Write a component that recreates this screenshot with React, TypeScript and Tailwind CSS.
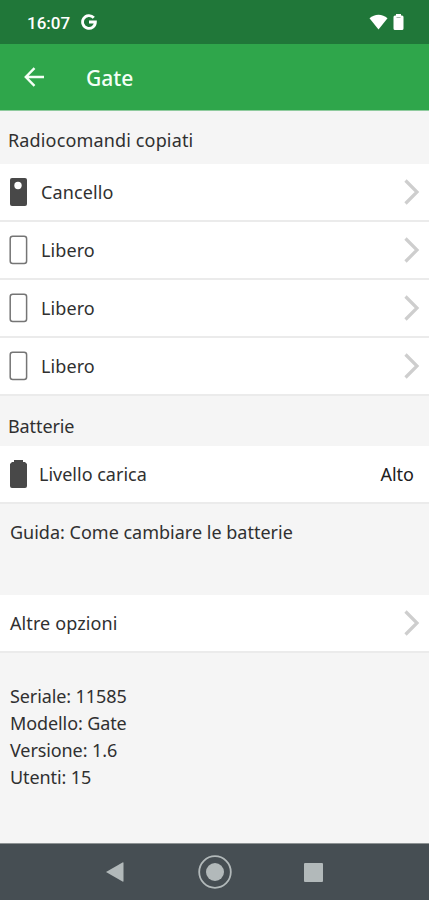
import type { ReactNode } from "react";

const remotes = [
  { name: "Cancello", used: true },
  { name: "Libero", used: false },
  { name: "Libero", used: false },
  { name: "Libero", used: false },
];

const info = ["Seriale: 11585", "Modello: Gate", "Versione: 1.6", "Utenti: 15"];

export default function App() {
  return (
    <div className="flex h-[900px] w-[429px] flex-col overflow-hidden bg-[#f5f5f5] font-['Noto_Sans',sans-serif] text-[18px] leading-[27px] text-[#303030]">
      <StatusBar />
      <header className="flex h-[67px] shrink-0 items-center border-b border-[#8fcb9e] bg-[#2fa64b] text-[#f4fff6]">
        <svg className="ml-6 h-5 w-5" viewBox="0 0 20 20" fill="none" stroke="currentColor" strokeWidth="2.4">
          <path d="M20 10H2M10.5 1.2 1.8 10l8.7 8.8" />
        </svg>
        <h1 className="ml-[42px] pt-0.5 text-[21px] font-medium">Gate</h1>
      </header>
      <main className="flex-1">
        <h2 className="h-[53px] px-2 pt-4 tracking-[0.15px]">Radiocomandi copiati</h2>
        <ul>
          {remotes.map((remote, i) => (
            <li key={i}>
              <Row>
                <RemoteIcon used={remote.used} />
                <span className="ml-[13px] flex-1 tracking-[0.1px]">{remote.name}</span>
                <Chevron />
              </Row>
            </li>
          ))}
        </ul>
        <h2 className="h-[50px] px-2 pt-[17px] tracking-[-0.1px]">Batterie</h2>
        <Row>
          <BatteryIcon />
          <span className="ml-[11px] flex-1">Livello carica</span>
          <span className="pr-[15px] text-[#202020]">Alto</span>
        </Row>
        <p className="h-[91px] px-2.5 pt-[15px]">Guida: Come cambiare le batterie</p>
        <Row>
          <span className="ml-2.5 flex-1 tracking-[0.1px]">Altre opzioni</span>
          <Chevron />
        </Row>
        <div className="px-2.5 pt-[30px] tracking-[-0.1px]">
          {info.map((line) => (
            <p key={line}>{line}</p>
          ))}
        </div>
      </main>
      <NavBar />
    </div>
  );
}

function StatusBar() {
  return (
    <div className="flex h-11 shrink-0 items-center bg-[#207739] text-white">
      <span className="ml-[27px] w-[54px] pt-0.5 font-['Roboto',sans-serif] text-[17px] font-medium">16:07</span>
      <svg className="h-4 w-4" viewBox="0 0 16 16" fill="none" stroke="currentColor" strokeWidth="2.8">
        <path d="M12.8 3.8A6.4 6.4 0 1 0 14.4 8H8" />
      </svg>
      <svg className="ml-auto h-4 w-[19px]" viewBox="0 0 19 16" fill="currentColor">
        <path d="M0.5 4.3C5.5-.5 13.5-.5 18.5 4.3L9.5 15.5Z" />
      </svg>
      <svg className="ml-[5px] mr-[25px] h-4 w-[11px]" viewBox="0 0 11 16" fill="currentColor">
        <path d="M3 0h5v1.5h1q1.5 0 1.5 1.5v11.5q0 1.5-1.5 1.5H2Q.5 16 .5 14.5V3Q.5 1.500 2 1.500h1Z" />
        <path d="M3.500 3.500h4" stroke="#a9b8ad" />
      </svg>
    </div>
  );
}

function Row({ children }: { children: ReactNode }) {
  return <div className="flex h-[58px] items-center border-b-2 border-[#ebebeb] bg-white">{children}</div>;
}

function RemoteIcon({ used }: { used: boolean }) {
  return (
    <svg className="ml-[9px] h-[30px] w-[19px]" viewBox="0 0 19 30">
      {used ? (
        <>
          <rect x="1" y="1" width="17" height="28" rx="2" fill="#484848" />
          <circle cx="9" cy="8.5" r="3.7" fill="#fff" />
        </>
      ) : (
        <rect x="1.2" y="1.2" width="16.4" height="27.2" rx="2.5" fill="#fff" stroke="#757575" strokeWidth="1.5" />
      )}
    </svg>
  );
}

function BatteryIcon() {
  return (
    <svg className="ml-[9px] h-[30px] w-[19px]" viewBox="0 0 19 30" fill="#484848">
      <path d="M5 1h9v2h2l2 2v22q0 2-2 2H3q-2 0-2-2V5l2-2h2Z" />
    </svg>
  );
}

function Chevron() {
  return (
    <svg className="mr-[9px] h-7 w-4" viewBox="0 0 16 28" fill="none" stroke="#cecece" strokeWidth="3.2">
      <path d="M1.500 2.500 13 14 1.500 25.500" />
    </svg>
  );
}

function NavBar() {
  return (
    <nav className="flex h-[57px] shrink-0 items-center border-t border-[#8d9293] bg-[#464e53] text-[#b2b9ba]">
      <svg className="ml-[105px] h-5 w-[19px]" viewBox="0 0 19 20" fill="currentColor">
        <path d="M1 10 17.5.5q1-.5 1 .5v18q0 1-1 .5Z" />
      </svg>
      <svg className="ml-[73px] h-[36px] w-[36px]" viewBox="0 0 36 36">
        <circle cx="18" cy="18" r="15.8" fill="none" stroke="currentColor" strokeWidth="1.8" />
        <circle cx="18" cy="18" r="9" fill="currentColor" />
      </svg>
      <span className="ml-[71px] h-[19px] w-[19px] rounded-[1px] bg-[#b2b9ba]" />
    </nav>
  );
}
